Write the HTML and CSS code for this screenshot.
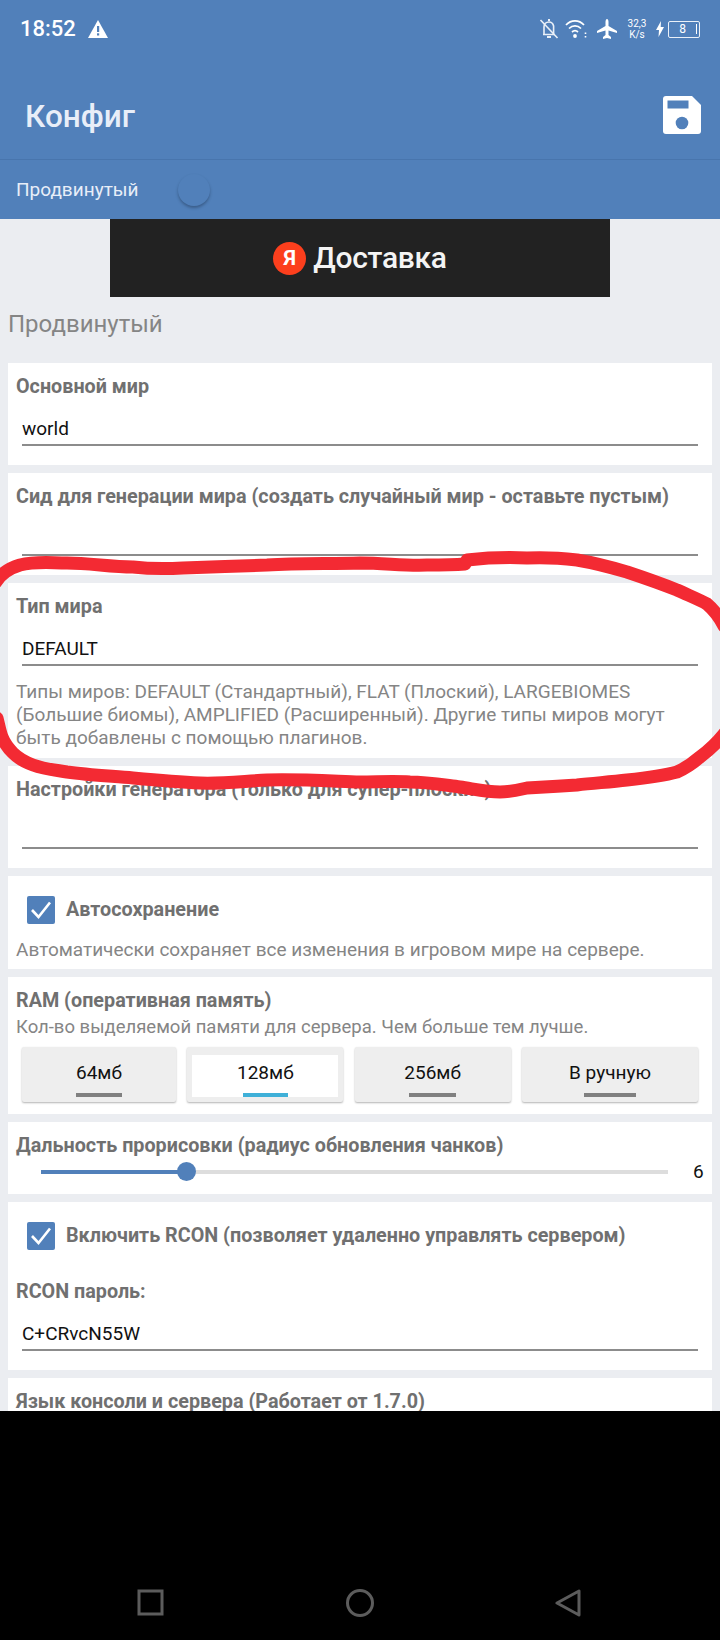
FILE: index.html
```html
<!DOCTYPE html>
<html lang="ru">
<head>
<meta charset="utf-8">
<title>Конфиг</title>
<link rel="stylesheet" href="styles.css">
</head>
<body>
<div class="screen">
  <header class="appbar">
    <div class="status">
      <span class="clock">18:52</span>
      <svg class="warn" viewBox="0 0 20 18"><path d="M10 0 L20 18 H0 Z" fill="#fff"/><rect x="9" y="6" width="2.2" height="6" fill="#5180ba"/><rect x="9" y="13.3" width="2.2" height="2.2" fill="#5180ba"/></svg>
      <span class="status-fill"></span>
      <svg class="ic-bell" viewBox="0 0 20 20" fill="none" stroke="#eaf0f8" stroke-width="1.6"><path d="M4 15.5 H15.5 M5 15.5 V8 C5 5 7 3 10 3 C12 3 14 4.5 14.6 7 V15.5"/><path d="M8 18 H12" stroke-width="2"/><path d="M1.5 1 L18.5 19"/><path d="M9 1 H11" stroke-width="2"/></svg>
      <svg class="ic-wifi" viewBox="0 0 23 20" fill="none" stroke="#fff" stroke-width="1.7"><path d="M1 6 C6 0.5 14 0.5 19 6"/><path d="M4 9.5 C7.5 6 12.5 6 16 9.5"/><path d="M7 13 C9 11.2 11 11.2 13 13"/><circle cx="10" cy="17" r="1.9" fill="#fff" stroke="none"/><path d="M20.5 13.5 V15 M20.5 17 V18.5" stroke-width="1.6"/></svg>
      <svg class="ic-plane" viewBox="0 0 20 20"><path fill="#fff" d="M10 0 C11 0 11.5 1.5 11.5 3 V7 L20 12 V14 L11.5 11.5 V16 L14 18 V20 L10 19 L6 20 V18 L8.5 16 V11.5 L0 14 V12 L8.5 7 V3 C8.5 1.5 9 0 10 0 Z"/></svg>
      <span class="speed"><span>32,3</span><span>K/s</span></span>
      <svg class="ic-bolt" viewBox="0 0 8 16"><path fill="#fff" d="M5 0 L0 9 H3 L2.5 16 L8 6 H4.7 Z"/></svg>
      <span class="battery"><span class="battery-num">8</span><span class="battery-tick"></span></span>
    </div>
    <div class="toolbar">
      <h1 class="title">Конфиг</h1>
      <svg class="save" viewBox="0 0 38 38"><path fill="#fff" d="M3 0 H29 L38 9 V35 a3 3 0 0 1 -3 3 H3 a3 3 0 0 1 -3 -3 V3 a3 3 0 0 1 3 -3 Z"/><rect x="4.500" y="4.500" width="21" height="8" fill="#5180ba"/><circle cx="19" cy="27" r="6.300" fill="#5180ba"/></svg>
    </div>
    <div class="tabbar">
      <span class="tab-label">Продвинутый</span>
      <span class="switch-knob"></span>
    </div>
  </header>

  <main class="content">
    <div class="banner">
      <span class="ya-logo">Я</span>
      <span class="ya-text">Доставка</span>
    </div>
    <h2 class="section">Продвинутый</h2>

    <section class="card">
      <div class="label">Основной мир</div>
      <div class="input">world</div>
    </section>
    <section class="card">
      <div class="label">Сид для генерации мира (создать случайный мир - оставьте пустым)</div>
      <div class="input"></div>
    </section>
    <section class="card card-hint">
      <div class="label">Тип мира</div>
      <div class="input">DEFAULT</div>
      <p class="hint hint-field">Типы миров: DEFAULT (Стандартный), FLAT (Плоский), LARGEBIOMES (Большие биомы), AMPLIFIED (Расширенный). Другие типы миров могут быть добавлены с помощью плагинов.</p>
    </section>
    <section class="card">
      <div class="label">Настройки генератора (только для супер-плоских)</div>
      <div class="input"></div>
    </section>
    <section class="card card-auto">
      <div class="check-row">
        <svg class="check" viewBox="0 0 28 28"><rect width="28" height="28" rx="2" fill="#5180ba"/><path d="M5 14 L11.500 21 L23 6.500" fill="none" stroke="#fff" stroke-width="2.600"/></svg>
        <span class="label">Автосохранение</span>
      </div>
      <p class="hint hint-auto">Автоматически сохраняет все изменения в игровом мире на сервере.</p>
    </section>
    <section class="card card-ram">
      <div class="label">RAM (оперативная память)</div>
      <p class="hint hint-ram">Кол-во выделяемой памяти для сервера. Чем больше тем лучше.</p>
      <div class="ram-row">
        <div class="ram-btn"><span>64мб</span><i></i></div>
        <div class="ram-btn active"><span>128мб</span><i></i></div>
        <div class="ram-btn"><span>256мб</span><i></i></div>
        <div class="ram-btn"><span>В ручную</span><i></i></div>
      </div>
    </section>
    <section class="card card-slider">
      <div class="label">Дальность прорисовки (радиус обновления чанков)</div>
      <div class="slider-row">
        <div class="track"><div class="track-on"></div><span class="thumb"></span></div>
        <span class="slider-val">6</span>
      </div>
    </section>
    <section class="card card-rcon">
      <div class="check-row">
        <svg class="check" viewBox="0 0 28 28"><rect width="28" height="28" rx="2" fill="#5180ba"/><path d="M5 14 L11.500 21 L23 6.500" fill="none" stroke="#fff" stroke-width="2.600"/></svg>
        <span class="label">Включить RCON (позволяет удаленно управлять сервером)</span>
      </div>
      <div class="label rcon-pass">RCON пароль:</div>
      <div class="input">C+CRvcN55W</div>
    </section>
    <section class="card">
      <div class="label">Язык консоли и сервера (Работает от 1.7.0)</div>
    </section>
  </main>

  <nav class="navbar">
    <svg class="nav-ic" viewBox="0 0 28 28" fill="none" stroke="#5c5c5c" stroke-width="3"><rect x="2" y="2" width="23" height="23"/></svg>
    <svg class="nav-ic" viewBox="0 0 28 28" fill="none" stroke="#5c5c5c" stroke-width="3"><circle cx="14" cy="14" r="12.500"/></svg>
    <svg class="nav-ic" viewBox="0 0 28 28" fill="none" stroke="#5c5c5c" stroke-width="3" stroke-linejoin="round"><path d="M25 2 V26 L3 14 Z"/></svg>
  </nav>

  <svg class="scribble" viewBox="0 0 720 1640" fill="none" stroke="#f32a33" stroke-width="13" stroke-linecap="round" stroke-linejoin="round">
    <path d="M-4 582 C2 572 10 568 20 565 C36 561 50 563 67 563 C90 563 110 567 133 567 C150 569 166 569 183 568 C210 567 240 566 267 565 C300 563 330 564 360 563 C385 563 405 566 427 565 C440 565 452 565 465 564"/>
    <path d="M467 560 C485 558 505 557 527 558 C545 557 560 558 577 560 C595 563 610 567 627 572 C645 578 662 584 677 590 C690 596 700 600 707 604 C714 610 719 616 724 626"/>
    <path d="M724 734 C716 744 708 751 700 757 C692 764 686 768 677 772 C662 776 645 778 627 780 C610 782 595 783 577 785 C560 786 545 787 527 788 C518 790 510 792 500 792 C486 792 474 789 460 787 C444 785 427 782 410 782 C393 781 377 782 360 782 C330 781 297 779 267 780 C245 781 222 784 200 783 C178 782 155 780 133 778 C110 776 88 775 67 772 C55 770 44 769 33 765 C25 762 18 758 13 753 C7 747 4 742 2 737 C0 732 -1 726 -3 718"/>
  </svg>
</div>
</body>
</html>
```

FILE: styles.css
```css
* { box-sizing: border-box; }
html, body { margin: 0; padding: 0; }
body { background: #000; font-family: Roboto, "Noto Sans", sans-serif; }
.screen { position: relative; width: 720px; height: 1640px; display: flex; flex-direction: column; overflow: hidden; background: #000; }

.appbar { background: #5180ba; color: #e8eef8; flex: none; }
.status { height: 58px; display: flex; align-items: center; padding: 0 20px 0 20px; color: #fff; }
.clock { font-size: 22px; font-weight: 500; line-height: 24px; }
.warn { width: 20px; height: 18px; margin-left: 12px; }
.status-fill { flex: 1; }
.ic-bell { width: 20px; height: 20px; }
.ic-wifi { width: 23px; height: 20px; margin-left: 6px; }
.ic-plane { width: 20px; height: 20px; margin-left: 9px; }
.speed { display: flex; flex-direction: column; align-items: center; width: 22px; margin-left: 9px; font-size: 10px; line-height: 11px; font-weight: 400; }
.ic-bolt { width: 8px; height: 16px; margin-left: 8px; }
.battery { width: 32px; height: 17px; margin-left: 4px; border: 1.500px solid #eaf0f8; border-radius: 2px; display: flex; align-items: center; justify-content: flex-end; padding-right: 2px; font-size: 12px; }
.battery-num { margin-right: 10px; line-height: 14px; }
.battery-tick { width: 1px; height: 10px; background: #fff; }

.toolbar { height: 102px; display: flex; align-items: center; justify-content: space-between; padding: 16px 19px 0 25px; border-bottom: 1px solid #4875ad; }
.title { margin: 0; font-size: 31.5px; line-height: 36px; font-weight: 500; color: #e8eef8; }
.save { width: 38px; height: 38px; margin-top: -4px; }

.tabbar { height: 59px; display: flex; align-items: center; padding-left: 16px; }
.tab-label { font-size: 19px; line-height: 24px; width: 162px; }
.switch-knob { width: 32px; height: 32px; border-radius: 50%; background: #5180ba; box-shadow: 0 2px 3px rgba(30, 50, 80, 0.45); }

.content { height: 1192px; flex: none; background: #ebedf1; overflow: hidden; }
.banner { width: 500px; height: 78px; margin: 0 auto; background: #222; display: flex; align-items: center; justify-content: center; gap: 7px; }
.ya-logo { width: 33px; height: 33px; border-radius: 50%; background: #fc3f1d; color: #fff; font: 700 21px/33px Roboto, sans-serif; text-align: center; }
.ya-text { color: #f4f4f4; font-size: 30px; line-height: 36px; font-weight: 500; letter-spacing: -0.3px; }
.section { margin: 0; padding: 13px 8px 0; height: 66px; font-size: 24px; line-height: 28px; font-weight: 400; color: #858585; }

.card { margin: 0 8px 8px; padding: 12px 8px 19px; background: #fff; }
.label { font-size: 19.75px; line-height: 24px; font-weight: 700; color: #707070; white-space: nowrap; }
.input { height: 47px; margin: 0 6px 0 6px; padding-bottom: 3px; display: flex; align-items: flex-end; font-size: 19px; line-height: 24px; color: #111; border-bottom: 2px solid #8c8c8c; }
.hint { margin: 0; font-size: 19px; line-height: 23px; color: #858585; }
.card-hint { padding-bottom: 9px; }
.hint-field { margin-top: 14px; }
.card-auto { padding: 0 8px 8px; }
.check-row { display: flex; align-items: center; padding-left: 11px; gap: 11px; height: 68px; }
.check { width: 28px; height: 28px; flex: none; }
.hint-auto { margin-top: -6px; }
.card-ram { padding: 12px 8px 14px; }
.hint-ram { margin-top: 3px; font-size: 18.5px; }
.ram-row { display: grid; grid-template-columns: 154px 156px 156px 176px; column-gap: 11.33px; margin: 8px 6px 0; height: 53px; }
.ram-btn { background: #eeeeee; border-radius: 2px; box-shadow: 0 1px 2px rgba(0, 0, 0, 0.3); display: flex; flex-direction: column; align-items: center; padding-top: 14px; font-size: 19px; line-height: 24px; color: #111; }
.ram-btn i { display: block; width: 30%; height: 4px; margin-top: 8px; background: #808080; }
.ram-btn.active { background: #fff; border: 5px solid #eeeeee; border-top-width: 8px; padding-top: 6px; }
.ram-btn.active i { background: #3fb0d8; margin-top: 8px; width: 45px; }
.card-slider { height: 72px; padding-bottom: 0; }
.slider-row { display: flex; align-items: center; height: 28px; padding-left: 25px; }
.track { position: relative; width: 627px; height: 4px; background: #dddddd; }
.track-on { width: 145px; height: 100%; background: #5180ba; }
.thumb { position: absolute; left: 136px; top: -8px; width: 19px; height: 19px; border-radius: 50%; background: #5180ba; }
.slider-val { margin-left: 25px; font-size: 19px; line-height: 24px; color: #111; }
.card-rcon { padding: 0 8px 19px; }
.rcon-pass { margin-top: 10px; }
.nav-ic { width: 28px; height: 28px; }
.navbar { flex: 1; background: #000; display: grid; grid-template-columns: 28px 28px 28px; justify-content: space-between; padding: 178px 138px 0 137px; }
.scribble { position: absolute; left: 0; top: 0; width: 720px; height: 1640px; pointer-events: none; }
```
